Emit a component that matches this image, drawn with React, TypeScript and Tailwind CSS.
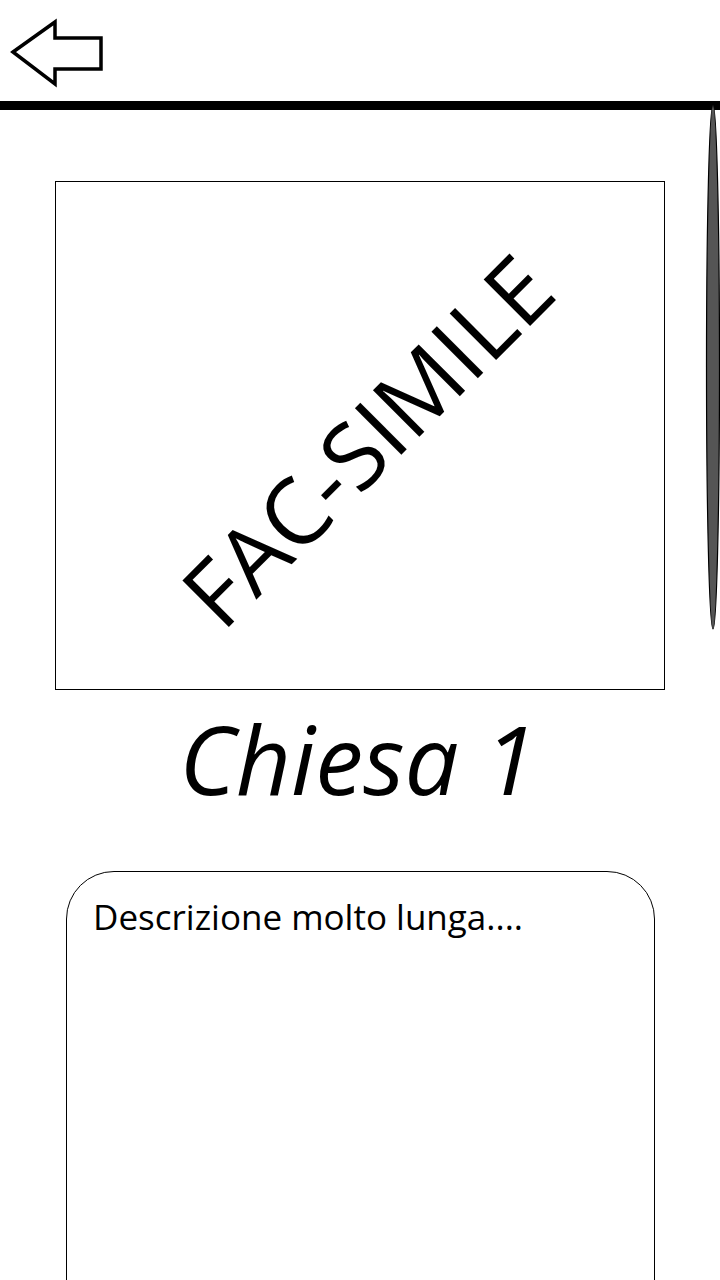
import React from "react";

export default function App() {
  return (
    <div className="relative w-[720px] h-[1280px] overflow-hidden bg-white" style={{ fontFamily: '"Open Sans", "Noto Sans", sans-serif' }}>
      <header className="h-[101px] flex items-start">
        <svg width="110" height="100" viewBox="0 0 110 100" className="block">
          <polygon points="13,52 55,22 55,38 101,38 101,69 55,69 55,84" fill="white" stroke="black" strokeWidth="3.5" strokeLinejoin="miter" />
        </svg>
      </header>
      <div className="h-[9px] bg-black w-full" />
      <div className="pl-[55px] pt-[71px]">
        <div className="relative w-[610px] h-[509px] border border-black flex items-center justify-center overflow-hidden">
          <span className="block text-[92px] leading-none text-black whitespace-nowrap -rotate-45 translate-x-[6px] translate-y-[4px]">FAC-SIMILE</span>
        </div>
      </div>
      <h1 className="text-center italic text-[96px] leading-none mt-[20px] text-black pr-[4px]">Chiesa 1</h1>
      <div className="ml-[66px] mt-[65px] w-[589px] h-[460px] border border-black rounded-t-[48px] pl-[26px] pt-[23px]">
        <p className="text-[35px] leading-tight text-black">Descrizione molto lunga....</p>
      </div>
      <svg className="absolute left-[704px] top-[104px]" width="16" height="530" viewBox="0 0 16 530">
        <ellipse cx="9" cy="263" rx="6.5" ry="262" fill="#555555" stroke="black" strokeWidth="1.2" />
      </svg>
    </div>
  );
}
